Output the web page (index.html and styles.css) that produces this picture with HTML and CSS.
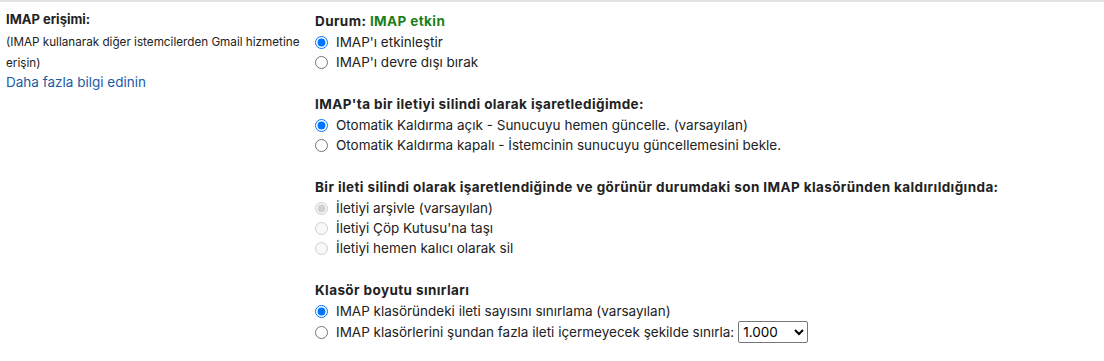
FILE: index.html
```html
<!DOCTYPE html>
<html lang="tr">
<head>
    <meta charset="UTF-8">
    <meta name="viewport" content="width=device-width, initial-scale=1.0">
    <title>IMAP erişimi</title>
    <link rel="stylesheet" href="styles.css">
</head>
<body>
    <div class="settings-row">
        <div class="label-col">
            <div class="label-title">IMAP erişimi:</div>
            <div class="label-note">(IMAP kullanarak diğer istemcilerden Gmail hizmetine erişin)</div>
            <a class="more-link" href="#">Daha fazla bilgi edinin</a>
        </div>
        <div class="options-col">
            <div class="group">
                <div class="group-title">Durum: <span class="status-on">IMAP etkin</span></div>
                <label class="option"><input type="radio" name="imap" checked> IMAP'ı etkinleştir</label>
                <label class="option"><input type="radio" name="imap"> IMAP'ı devre dışı bırak</label>
            </div>
            <div class="group">
                <div class="group-title">IMAP'ta bir iletiyi silindi olarak işaretlediğimde:</div>
                <label class="option"><input type="radio" name="expunge" checked> Otomatik Kaldırma açık - Sunucuyu hemen güncelle. (varsayılan)</label>
                <label class="option"><input type="radio" name="expunge"> Otomatik Kaldırma kapalı - İstemcinin sunucuyu güncellemesini bekle.</label>
            </div>
            <div class="group">
                <div class="group-title">Bir ileti silindi olarak işaretlendiğinde ve görünür durumdaki son IMAP klasöründen kaldırıldığında:</div>
                <label class="option disabled"><input type="radio" name="remove" checked disabled> İletiyi arşivle (varsayılan)</label>
                <label class="option disabled"><input type="radio" name="remove" disabled> İletiyi Çöp Kutusu'na taşı</label>
                <label class="option disabled"><input type="radio" name="remove" disabled> İletiyi hemen kalıcı olarak sil</label>
            </div>
            <div class="group">
                <div class="group-title">Klasör boyutu sınırları</div>
                <label class="option"><input type="radio" name="limit" checked> IMAP klasöründeki ileti sayısını sınırlama (varsayılan)</label>
                <label class="option"><input type="radio" name="limit"> IMAP klasörlerini şundan fazla ileti içermeyecek şekilde sınırla:
                    <select class="limit-select">
                        <option>1.000</option>
                        <option>2.000</option>
                        <option>5.000</option>
                        <option>10.000</option>
                    </select>
                </label>
            </div>
        </div>
    </div>
</body>
</html>
```

FILE: styles.css
```css
body {
    margin: 0;
    background-color: #fff;
    font-family: Inter, "Noto Sans", sans-serif;
    font-size: 13.5px;
    color: #222;
}
.settings-row {
    display: flex;
    border-top: 2px solid #e3e3e3;
    padding-top: 7px;
}
.label-col {
    width: 303px;
    padding-left: 6px;
    flex-shrink: 0;
}
.label-title {
    font-weight: bold;
    font-size: 13px;
    line-height: 20px;
}
.label-note {
    font-size: 11.7px;
    line-height: 21px;
    margin-top: 3px;
}
.more-link {
    display: block;
    color: #1a5ba6;
    text-decoration: none;
    line-height: 20px;
    margin-top: -2px;
}
.options-col {
    padding-left: 6px;
}
.group {
    margin-bottom: 22px;
}
.group-title {
    font-weight: bold;
    line-height: 20px;
    letter-spacing: 0.4px;
    margin-top: 2px;
    margin-bottom: 1px;
}
.status-on {
    color: #1a7f1a;
}
.option {
    display: flex;
    align-items: center;
    line-height: 20px;
    gap: 8px;
}
.option input {
    margin: 0;
    width: 13px;
    height: 13px;
}
.limit-select {
    font-family: inherit;
    font-size: 13.5px;
    margin-left: -4px;
    height: 22px;
    width: 70px;
    border: 1px solid #767676;
    border-radius: 2px;
    background-color: #fff;
}
```
